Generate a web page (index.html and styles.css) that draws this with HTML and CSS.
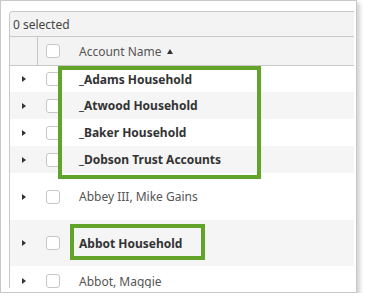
FILE: index.html
```html
<!DOCTYPE html>
<html lang="en">
<head>
    <meta charset="UTF-8">
    <title>Accounts</title>
    <link rel="stylesheet" href="styles.css">
</head>
<body>
    <div class="frame">
        <div class="grid">
            <div class="toolbar">0 selected</div>

            <div class="row header">
                <div class="cell expand"></div>
                <div class="cell check"><span class="box"></span></div>
                <div class="cell name">Account Name <span class="sort"></span></div>
            </div>

            <div class="row first">
                <div class="cell expand"><span class="arrow"></span></div>
                <div class="cell check"><span class="box"></span></div>
                <div class="cell name bold">_Adams Household</div>
            </div>
            <div class="row alt">
                <div class="cell expand"><span class="arrow"></span></div>
                <div class="cell check"><span class="box"></span></div>
                <div class="cell name bold">_Atwood Household</div>
            </div>
            <div class="row">
                <div class="cell expand"><span class="arrow"></span></div>
                <div class="cell check"><span class="box"></span></div>
                <div class="cell name bold">_Baker Household</div>
            </div>
            <div class="row alt">
                <div class="cell expand"><span class="arrow"></span></div>
                <div class="cell check"><span class="box"></span></div>
                <div class="cell name bold">_Dobson Trust Accounts</div>
            </div>
            <div class="row tall">
                <div class="cell expand"><span class="arrow"></span></div>
                <div class="cell check"><span class="box"></span></div>
                <div class="cell name">Abbey III, Mike Gains</div>
            </div>
            <div class="row alt tall-b">
                <div class="cell expand"><span class="arrow"></span></div>
                <div class="cell check"><span class="box"></span></div>
                <div class="cell name bold">Abbot Household</div>
            </div>
            <div class="row last">
                <div class="cell expand"><span class="arrow"></span></div>
                <div class="cell check"><span class="box"></span></div>
                <div class="cell name">Abbot, Maggie</div>
            </div>
        </div>

        <!-- callouts -->
        <div class="callout callout-group"></div>
        <div class="callout callout-single"></div>
    </div>
</body>
</html>
```

FILE: styles.css
```css
* {
    margin: 0;
    padding: 0;
    box-sizing: border-box;
}

body {
    font-family: "Noto Sans", "Open Sans", sans-serif;
    font-size: 12px;
    background: #fff;
    color: #333;
}

.frame {
    position: relative;
    width: 357px;
    height: 293px;
    border: 1px solid #c8c8c8;
    box-shadow: 3px 3px 4px rgba(0, 0, 0, 0.18);
    padding: 10px 2px 0 8px;
    background: #fff;
}

.grid {
    height: 277px;
    overflow: hidden;
    border-left: 1px solid #c8c8c8;
    border-top: 1px solid #c8c8c8;
    border-top-left-radius: 4px;
}

.toolbar {
    height: 25px;
    background: #f3f3f3;
    border-bottom: 1px solid #c8c8c8;
    padding-left: 3px;
    display: flex;
    align-items: center;
    color: #444;
}

.row {
    display: flex;
    align-items: center;
    height: 27px;
    background: #fff;
}

.row.alt {
    background: #f5f5f5;
}

.row.first {
    height: 26px;
}

.row.tall {
    height: 47px;
}

.row.tall-b {
    height: 46px;
}

.row.last {
    height: 30px;
}

.row.header {
    height: 29px;
    background: #f3f3f3;
    border-bottom: 1px solid #c8c8c8;
    color: #555;
}

.cell {
    height: 100%;
    display: flex;
    align-items: center;
}

.expand {
    width: 28px;
    justify-content: center;
    padding-left: 1px;
    border-right: 1px solid transparent;
}

.header .expand {
    border-right-color: #c8c8c8;
}

.check {
    width: 41px;
    padding-left: 8px;
}

.box {
    display: block;
    width: 14px;
    height: 14px;
    border: 1px solid #c6c6c6;
    border-radius: 3px;
    background: #fff;
}

.name {
    flex: 1;
    color: #555;
}

.name.bold {
    font-weight: 700;
    color: #333;
}

.arrow {
    display: block;
    width: 0;
    height: 0;
    border-left: 4px solid #333;
    border-top: 3.5px solid transparent;
    border-bottom: 3.5px solid transparent;
}

.sort {
    display: inline-block;
    width: 0;
    height: 0;
    margin-left: 5px;
    border-bottom: 5px solid #333;
    border-left: 3.5px solid transparent;
    border-right: 3.5px solid transparent;
}

.callout {
    position: absolute;
    border: 4px solid #62a42a;
}

.callout-group {
    left: 57px;
    top: 65px;
    width: 203px;
    height: 113px;
}

.callout-single {
    left: 69px;
    top: 223px;
    width: 135px;
    height: 36px;
}
```
